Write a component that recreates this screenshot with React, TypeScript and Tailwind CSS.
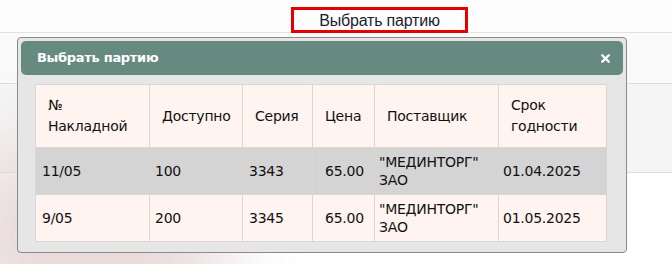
import { X } from 'lucide-react';

const ROWS = [
    { num: "11/05", avail: "100", series: "3343", price: "65.00", supplier: "\"МЕДИНТОРГ\" ЗАО", expiry: "01.04.2025", selected: true },
    { num: "9/05", avail: "200", series: "3345", price: "65.00", supplier: "\"МЕДИНТОРГ\" ЗАО", expiry: "01.05.2025", selected: false },
];

const HEADERS = [
    { label: "№ Накладной", w: "w-[114px]" },
    { label: "Доступно", w: "w-[93px]" },
    { label: "Серия", w: "w-[70px]" },
    { label: "Цена", w: "w-[62px]" },
    { label: "Поставщик", w: "w-[124px]" },
    { label: "Срок годности", w: "w-[108px]" },
];

export default function App() {
    return (
        <main className="relative w-[672px] h-[264px] overflow-hidden bg-white font-['Liberation_Sans',sans-serif]">
            {/* Top bar with trigger */}
            <div className="h-[33px] bg-[#fdfdfd] border-b border-[#e2e2e2] pt-[7px] pl-[291px]">
                <button className="w-[177px] h-[26px] border-[3px] border-[#e60000] text-[16px] leading-[19px] text-[#1c1c2e] tracking-[-0.2px]">
                    Выбрать партию
                </button>
            </div>
            <div className="h-[51px] bg-[#fafafa] border-b border-[#dcdcdc]" />
            <div className="h-[89px] bg-[#f5f5f5] border-b border-[#dcdcdc]" />

            {/* Blurred backdrop image hint */}
            <div className="absolute left-[-50px] top-[140px] w-[280px] h-[190px] rounded-full bg-[#e6d6d6] blur-2xl opacity-90" />

            {/* Dialog */}
            <div className="absolute left-[17px] top-[37px] w-[610px] h-[216px] bg-[#e6e6e6] border border-[#8a8a8a] rounded-[4px] p-[3px] font-['DejaVu_Sans',sans-serif]">
                <div className="h-[34px] bg-[#668a80] rounded-[5px] flex items-center justify-between pl-[16px] pr-[11px]">
                    <span className="text-white font-bold text-[13px] tracking-[-0.3px]">Выбрать партию</span>
                    <X size={13} strokeWidth={4.5} className="text-white" />
                </div>

                <table className="mt-[9px] ml-[14px] border-collapse text-[14px] leading-[21px] text-[#111] tracking-[-0.25px]">
                    <thead>
                        <tr className="h-[63px] bg-[#fff4ef]">
                            {HEADERS.map((h) => (
                                <th key={h.label} className={`${h.w} border border-[#dcd6d3] pl-[12px] pr-[4px] text-left font-normal align-middle`}>
                                    {h.label}
                                </th>
                            ))}
                        </tr>
                    </thead>
                    <tbody>
                        {ROWS.map((r) => (
                            <tr key={r.num} className={`h-[47px] ${r.selected ? 'bg-[#d4d4d4]' : 'bg-[#fff4ef]'}`}>
                                <td className="border border-[#dcd6d3] pl-[6px]">{r.num}</td>
                                <td className="border border-[#dcd6d3] pl-[5px]">{r.avail}</td>
                                <td className="border border-[#dcd6d3] pl-[6px]">{r.series}</td>
                                <td className="border border-[#dcd6d3] pl-[12px]">{r.price}</td>
                                <td className="border border-[#dcd6d3] pl-[4px] pr-[2px] leading-[18px]">{r.supplier}</td>
                                <td className="border border-[#dcd6d3] pl-[4px]">{r.expiry}</td>
                            </tr>
                        ))}
                    </tbody>
                </table>
            </div>
        </main>
    );
}
